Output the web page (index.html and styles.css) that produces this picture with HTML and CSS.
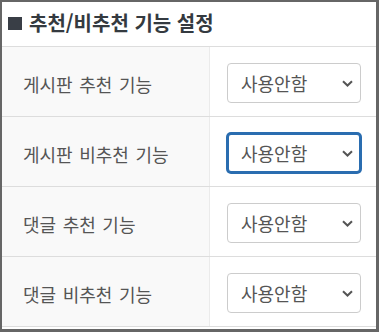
FILE: index.html
```html
<!DOCTYPE html>
<html lang="ko">
<head>
<meta charset="utf-8">
<title>추천/비추천 기능 설정</title>
<link rel="stylesheet" href="styles.css">
</head>
<body>
<div class="panel">
  <div class="panel-head">
    <span class="head-mark"></span>
    <h2 class="head-title">추천/비추천 기능 설정</h2>
  </div>
  <div class="rows">
    <div class="row">
      <div class="label">게시판 추천 기능</div>
      <div class="field">
        <div class="select"><span>사용안함</span><svg class="chev" width="11" height="7" viewBox="0 0 11 7"><path d="M1 1.2 L5.5 5.5 L10 1.2" fill="none" stroke="#555" stroke-width="2"/></svg></div>
      </div>
    </div>
    <div class="row">
      <div class="label">게시판 비추천 기능</div>
      <div class="field">
        <div class="select is-focus"><span>사용안함</span><svg class="chev" width="11" height="7" viewBox="0 0 11 7"><path d="M1 1.2 L5.5 5.5 L10 1.2" fill="none" stroke="#555" stroke-width="2"/></svg></div>
      </div>
    </div>
    <div class="row">
      <div class="label">댓글 추천 기능</div>
      <div class="field">
        <div class="select"><span>사용안함</span><svg class="chev" width="11" height="7" viewBox="0 0 11 7"><path d="M1 1.2 L5.5 5.5 L10 1.2" fill="none" stroke="#555" stroke-width="2"/></svg></div>
      </div>
    </div>
    <div class="row">
      <div class="label">댓글 비추천 기능</div>
      <div class="field">
        <div class="select"><span>사용안함</span><svg class="chev" width="11" height="7" viewBox="0 0 11 7"><path d="M1 1.2 L5.5 5.5 L10 1.2" fill="none" stroke="#555" stroke-width="2"/></svg></div>
      </div>
    </div>
  </div>
</div>
</body>
</html>
```
FILE: styles.css
```css
html, body {
  margin: 0;
  padding: 0;
  background: #fff;
}
body {
  font-family: "Noto Sans CJK KR", "Noto Sans", sans-serif;
}
.panel {
  box-sizing: border-box;
  width: 379px;
  height: 332px;
  border: 2px solid #666;
  border-right-width: 3px;
  border-bottom-width: 3px;
  background: #fff;
  display: flex;
  flex-direction: column;
  overflow: hidden;
}
.panel-head {
  box-sizing: border-box;
  height: 45px;
  border-bottom: 1px solid #ddd;
  display: flex;
  align-items: center;
  padding: 0 0 3px 6px;
  gap: 7px;
}
.head-mark {
  width: 14px;
  height: 13px;
  background: #393e46;
  margin-top: 2px;
}
.head-title {
  margin: 0;
  font-size: 20px;
  font-weight: 700;
  color: #343a40;
  line-height: 1;
}
.rows {
  display: flex;
  flex-direction: column;
}
.row {
  box-sizing: border-box;
  height: 70px;
  border-bottom: 1px solid #ddd;
  display: flex;
}
.label {
  box-sizing: border-box;
  width: 208px;
  background: #f9f9f9;
  border-right: 1px solid #ebebeb;
  display: flex;
  align-items: center;
  padding: 4px 0 0 21px;
  font-size: 18px;
  color: #555;
  word-spacing: 1.5px;
}
.field {
  flex: 1;
  display: flex;
  align-items: center;
  padding: 3px 0 0 17px;
}
.select {
  box-sizing: border-box;
  width: 134px;
  height: 40px;
  border: 1px solid #ccc;
  border-radius: 4px;
  background: #fff;
  display: flex;
  align-items: center;
  justify-content: space-between;
  padding: 0 7px 0 13px;
  font-size: 18px;
  color: #555;
}
.select.is-focus {
  border: 2px solid #2a6db0;
  box-shadow: 0 0 0 1px #2a6db0;
  padding: 0 6px 0 12px;
  border-radius: 4px;
}
.chev {
  display: block;
}
```
